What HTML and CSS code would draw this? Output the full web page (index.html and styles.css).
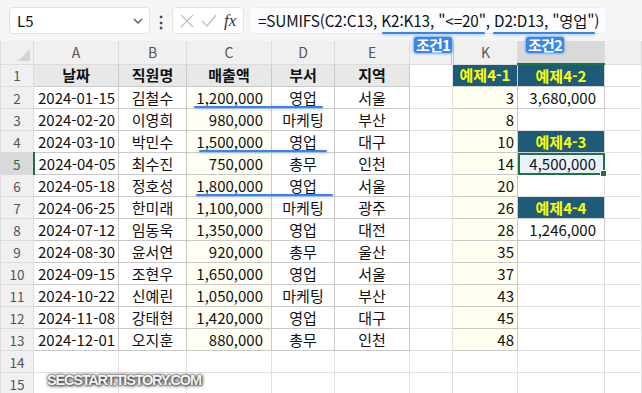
FILE: index.html
```html
<!DOCTYPE html>
<html lang="ko">
<head>
    <meta charset="UTF-8">
    <title>SUMIFS 예제</title>
    <link rel="stylesheet" href="styles.css">
</head>
<body>
    <div class="app">
        <div class="formula-bar">
            <div class="name-box">
                <span>L5</span>
                <svg class="chevron" width="10" height="6" viewBox="0 0 10 6"><path d="M1 1l4 4 4-4" fill="none" stroke="#555" stroke-width="1.3"/></svg>
            </div>
            <div class="dots">⋮</div>
            <div class="fx-box">
                <svg width="14" height="14" viewBox="0 0 14 14"><path d="M1 1l12 12M13 1L1 13" stroke="#bdbdbd" stroke-width="1.2"/></svg>
                <svg width="16" height="14" viewBox="0 0 16 14"><path d="M1 7l5 5 9-11" fill="none" stroke="#bdbdbd" stroke-width="1.2"/></svg>
                <span class="fx">fx</span>
            </div>
            <div class="formula-input">=SUMIFS(C2:C13, K2:K13, "&lt;=20", D2:D13, "영업")</div>
        </div>

        <table class="sheet">
            <colgroup>
                <col style="width:33px">
                <col style="width:85px">
                <col style="width:68px">
                <col style="width:85px">
                <col style="width:63px">
                <col style="width:75px">
                <col style="width:43px">
                <col style="width:65px">
                <col style="width:87px">
                <col>
            </colgroup>
            <tr class="col-head">
                <th class="corner"><span class="tri"></span></th>
                <th>A</th><th>B</th><th>C</th><th>D</th><th>E</th><th class="hidden-mark"></th><th>K</th><th class="sel"></th><th></th>
            </tr>
            <tr>
                <th>1</th>
                <td class="t hd">날짜</td><td class="t hd">직원명</td><td class="t hd">매출액</td><td class="t hd">부서</td><td class="t hd">지역</td>
                <td></td><td class="ex">예제4-1</td><td class="ex">예제4-2</td><td></td>
            </tr>
            <tr>
                <th>2</th>
                <td class="t">2024-01-15</td><td class="t c">김철수</td><td class="t amt">1,200,000</td><td class="t c">영업</td><td class="t c">서울</td>
                <td></td><td class="k">3</td><td class="res">3,680,000</td><td></td>
            </tr>
            <tr>
                <th>3</th>
                <td class="t">2024-02-20</td><td class="t c">이영희</td><td class="t amt">980,000</td><td class="t c">마케팅</td><td class="t c">부산</td>
                <td></td><td class="k">8</td><td></td><td></td>
            </tr>
            <tr>
                <th>4</th>
                <td class="t">2024-03-10</td><td class="t c">박민수</td><td class="t amt">1,500,000</td><td class="t c">영업</td><td class="t c">대구</td>
                <td></td><td class="k">10</td><td class="ex">예제4-3</td><td></td>
            </tr>
            <tr class="cur">
                <th>5</th>
                <td class="t">2024-04-05</td><td class="t c">최수진</td><td class="t amt">750,000</td><td class="t c">총무</td><td class="t c">인천</td>
                <td></td><td class="k">14</td><td class="res active">4,500,000<span class="handle"></span></td><td></td>
            </tr>
            <tr>
                <th>6</th>
                <td class="t">2024-05-18</td><td class="t c">정호성</td><td class="t amt">1,800,000</td><td class="t c">영업</td><td class="t c">서울</td>
                <td></td><td class="k">20</td><td></td><td></td>
            </tr>
            <tr>
                <th>7</th>
                <td class="t">2024-06-25</td><td class="t c">한미래</td><td class="t amt">1,100,000</td><td class="t c">마케팅</td><td class="t c">광주</td>
                <td></td><td class="k">26</td><td class="ex">예제4-4</td><td></td>
            </tr>
            <tr>
                <th>8</th>
                <td class="t">2024-07-12</td><td class="t c">임동욱</td><td class="t amt">1,350,000</td><td class="t c">영업</td><td class="t c">대전</td>
                <td></td><td class="k">28</td><td class="res">1,246,000</td><td></td>
            </tr>
            <tr>
                <th>9</th>
                <td class="t">2024-08-30</td><td class="t c">윤서연</td><td class="t amt">920,000</td><td class="t c">총무</td><td class="t c">울산</td>
                <td></td><td class="k">35</td><td></td><td></td>
            </tr>
            <tr>
                <th>10</th>
                <td class="t">2024-09-15</td><td class="t c">조현우</td><td class="t amt">1,650,000</td><td class="t c">영업</td><td class="t c">서울</td>
                <td></td><td class="k">37</td><td></td><td></td>
            </tr>
            <tr>
                <th>11</th>
                <td class="t">2024-10-22</td><td class="t c">신예린</td><td class="t amt">1,050,000</td><td class="t c">마케팅</td><td class="t c">부산</td>
                <td></td><td class="k">43</td><td></td><td></td>
            </tr>
            <tr>
                <th>12</th>
                <td class="t">2024-11-08</td><td class="t c">강태현</td><td class="t amt">1,420,000</td><td class="t c">영업</td><td class="t c">대구</td>
                <td></td><td class="k">45</td><td></td><td></td>
            </tr>
            <tr>
                <th>13</th>
                <td class="t">2024-12-01</td><td class="t c">오지훈</td><td class="t amt">880,000</td><td class="t c">총무</td><td class="t c">인천</td>
                <td></td><td class="k">48</td><td></td><td></td>
            </tr>
            <tr>
                <th>14</th>
                <td></td><td></td><td></td><td></td><td></td><td></td><td></td><td></td><td></td>
            </tr>
            <tr>
                <th>15</th>
                <td></td><td></td><td></td><td></td><td></td><td></td><td></td><td></td><td></td>
            </tr>
        </table>

        <!-- 주석 표시 -->
        <span class="uline u1"></span>
        <span class="uline u2"></span>
        <span class="uline u3"></span>
        <span class="uline u4"></span>
        <span class="uline u5"></span>
        <span class="tag tag1">조건1</span>
        <span class="tag tag2">조건2</span>
        <div class="watermark">SECSTART.TISTORY.COM</div>
    </div>
</body>
</html>
```

FILE: styles.css
```css
:root {
    --grid: #e1e1e1;
    --border: #c9c9c9;
    --head-bg: #f0f0f0;
    --green: #1e7145;
    --teal: #1d5b79;
    --note: #3a86e8;
}

body {
    margin: 0;
    background: #f5f5f5;
    font-family: "Noto Sans CJK KR", "Noto Sans", sans-serif;
    color: #111;
}

.app {
    position: relative;
    width: 642px;
    height: 393px;
    overflow: hidden;
}

/* 수식 입력줄 */
.formula-bar {
    display: flex;
    align-items: center;
    height: 41px;
    padding: 0 0 0 9px;
    box-sizing: border-box;
}

.name-box {
    width: 141px;
    height: 27px;
    box-sizing: border-box;
    background: #fff;
    border: 1px solid #e2e2e2;
    border-radius: 4px;
    display: flex;
    align-items: center;
    justify-content: space-between;
    padding: 0 6px 0 7px;
    font-size: 15px;
}

.dots {
    width: 22px;
    text-align: center;
    font-size: 16px;
    font-weight: bold;
    color: #444;
}

.fx-box {
    width: 72px;
    height: 27px;
    box-sizing: border-box;
    background: #fff;
    border: 1px solid #e2e2e2;
    border-radius: 4px;
    display: flex;
    align-items: center;
    justify-content: space-around;
    padding: 0 3px;
}

.fx {
    font-family: "Liberation Serif", serif;
    font-style: italic;
    font-size: 17px;
    color: #333;
}

.formula-input {
    margin-left: 5px;
    width: 358px;
    height: 27px;
    box-sizing: border-box;
    background: #fafcff;
    border: 1px solid #eaeef4;
    border-radius: 4px;
    padding-left: 8px;
    font-size: 15.3px;
    line-height: 25px;
    white-space: nowrap;
    letter-spacing: -0.15px;
}

/* 시트 */
.sheet {
    border-collapse: collapse;
    table-layout: fixed;
    width: 642px;
    background: #fff;
    font-size: 15px;
}

.sheet tr {
    height: 22px;
}

.sheet td {
    border: 1px solid var(--grid);
    padding: 0 8px 0 4px;
    height: 21px;
    line-height: 20px;
    white-space: nowrap;
    overflow: visible;
}

.sheet th {
    background: var(--head-bg);
    font-weight: normal;
    color: #555;
    font-size: 13.5px;
    border: 1px solid #dcdcdc;
    padding: 0;
    text-align: center;
}

.col-head {
    height: 23px !important;
}

.col-head th {
    font-size: 14px;
    color: #555;
    border-top: none;
}

.col-head th.sel {
    background: #d9d9d9;
    border-bottom: 2px solid var(--green);
    color: #333;
}

.col-head th.hidden-mark {
    border-right: 3px double #c4c4c4;
}

.corner {
    position: relative;
}

.tri {
    position: absolute;
    right: 3px;
    bottom: 3px;
    width: 0;
    height: 0;
    border-left: 12px solid transparent;
    border-bottom: 12px solid #d4d4d4;
}

.cur th {
    background: #d9d9d9;
    color: var(--green);
    border-right: 2px solid var(--green);
}

.sheet td.t {
    border: 1px solid var(--border);
}

.sheet td.hd {
    background: #e8e8e8;
    text-align: center;
    font-weight: 600;
    padding: 0;
}

.sheet td.c {
    text-align: center;
    padding: 0;
}

.sheet td.amt {
    background: #fffef2;
    text-align: right;
}

.sheet td.k {
    background: #fffff0;
    border: 1px solid var(--border);
    text-align: right;
    padding-right: 3px;
}

.sheet td.ex {
    background: var(--teal);
    color: #ffff00;
    font-weight: bold;
    text-align: center;
    border: 1px solid #d0d0d0;
    padding: 0;
}

.sheet td.res {
    text-align: right;
    border: 1px solid var(--border);
}

.sheet td.active {
    position: relative;
    background: #e9f1fc;
    outline: 2px solid var(--green);
    outline-offset: -2px;
}

.handle {
    position: absolute;
    right: -3px;
    bottom: -3px;
    width: 5px;
    height: 5px;
    background: var(--green);
    border: 1px solid #fff;
}

/* 주석 밑줄과 라벨 */
.uline {
    position: absolute;
    height: 2px;
    border-radius: 1px;
    background: var(--note);
    box-shadow: 0 1px 3px rgba(58, 134, 232, 0.45);
}

.u1 { left: 382px; top: 32px; width: 103px; }
.u2 { left: 493px; top: 32px; width: 102px; }
.u3 { left: 194px; top: 106px; width: 129px; }
.u4 { left: 199px; top: 150px; width: 128px; }
.u5 { left: 196px; top: 194px; width: 137px; }

.tag {
    position: absolute;
    top: 37px;
    padding: 0 2px;
    height: 16px;
    line-height: 16px;
    font-size: 15px;
    font-weight: bold;
    color: #fff;
    background: var(--note);
    border-radius: 3px;
    box-shadow: 0 0 2px 1px rgba(120, 170, 240, 0.9);
    letter-spacing: -0.8px;
}

.tag1 { left: 414px; }
.tag2 { left: 526px; }

.watermark {
    position: absolute;
    left: 47px;
    top: 372px;
    font-family: "Liberation Sans", sans-serif;
    font-weight: bold;
    font-size: 14.5px;
    letter-spacing: -1.2px;
    color: #f4f4f4;
    text-shadow: 0 0 2px #333, 1px 1px 3px #444, 0 0 4px #666;
}
```
